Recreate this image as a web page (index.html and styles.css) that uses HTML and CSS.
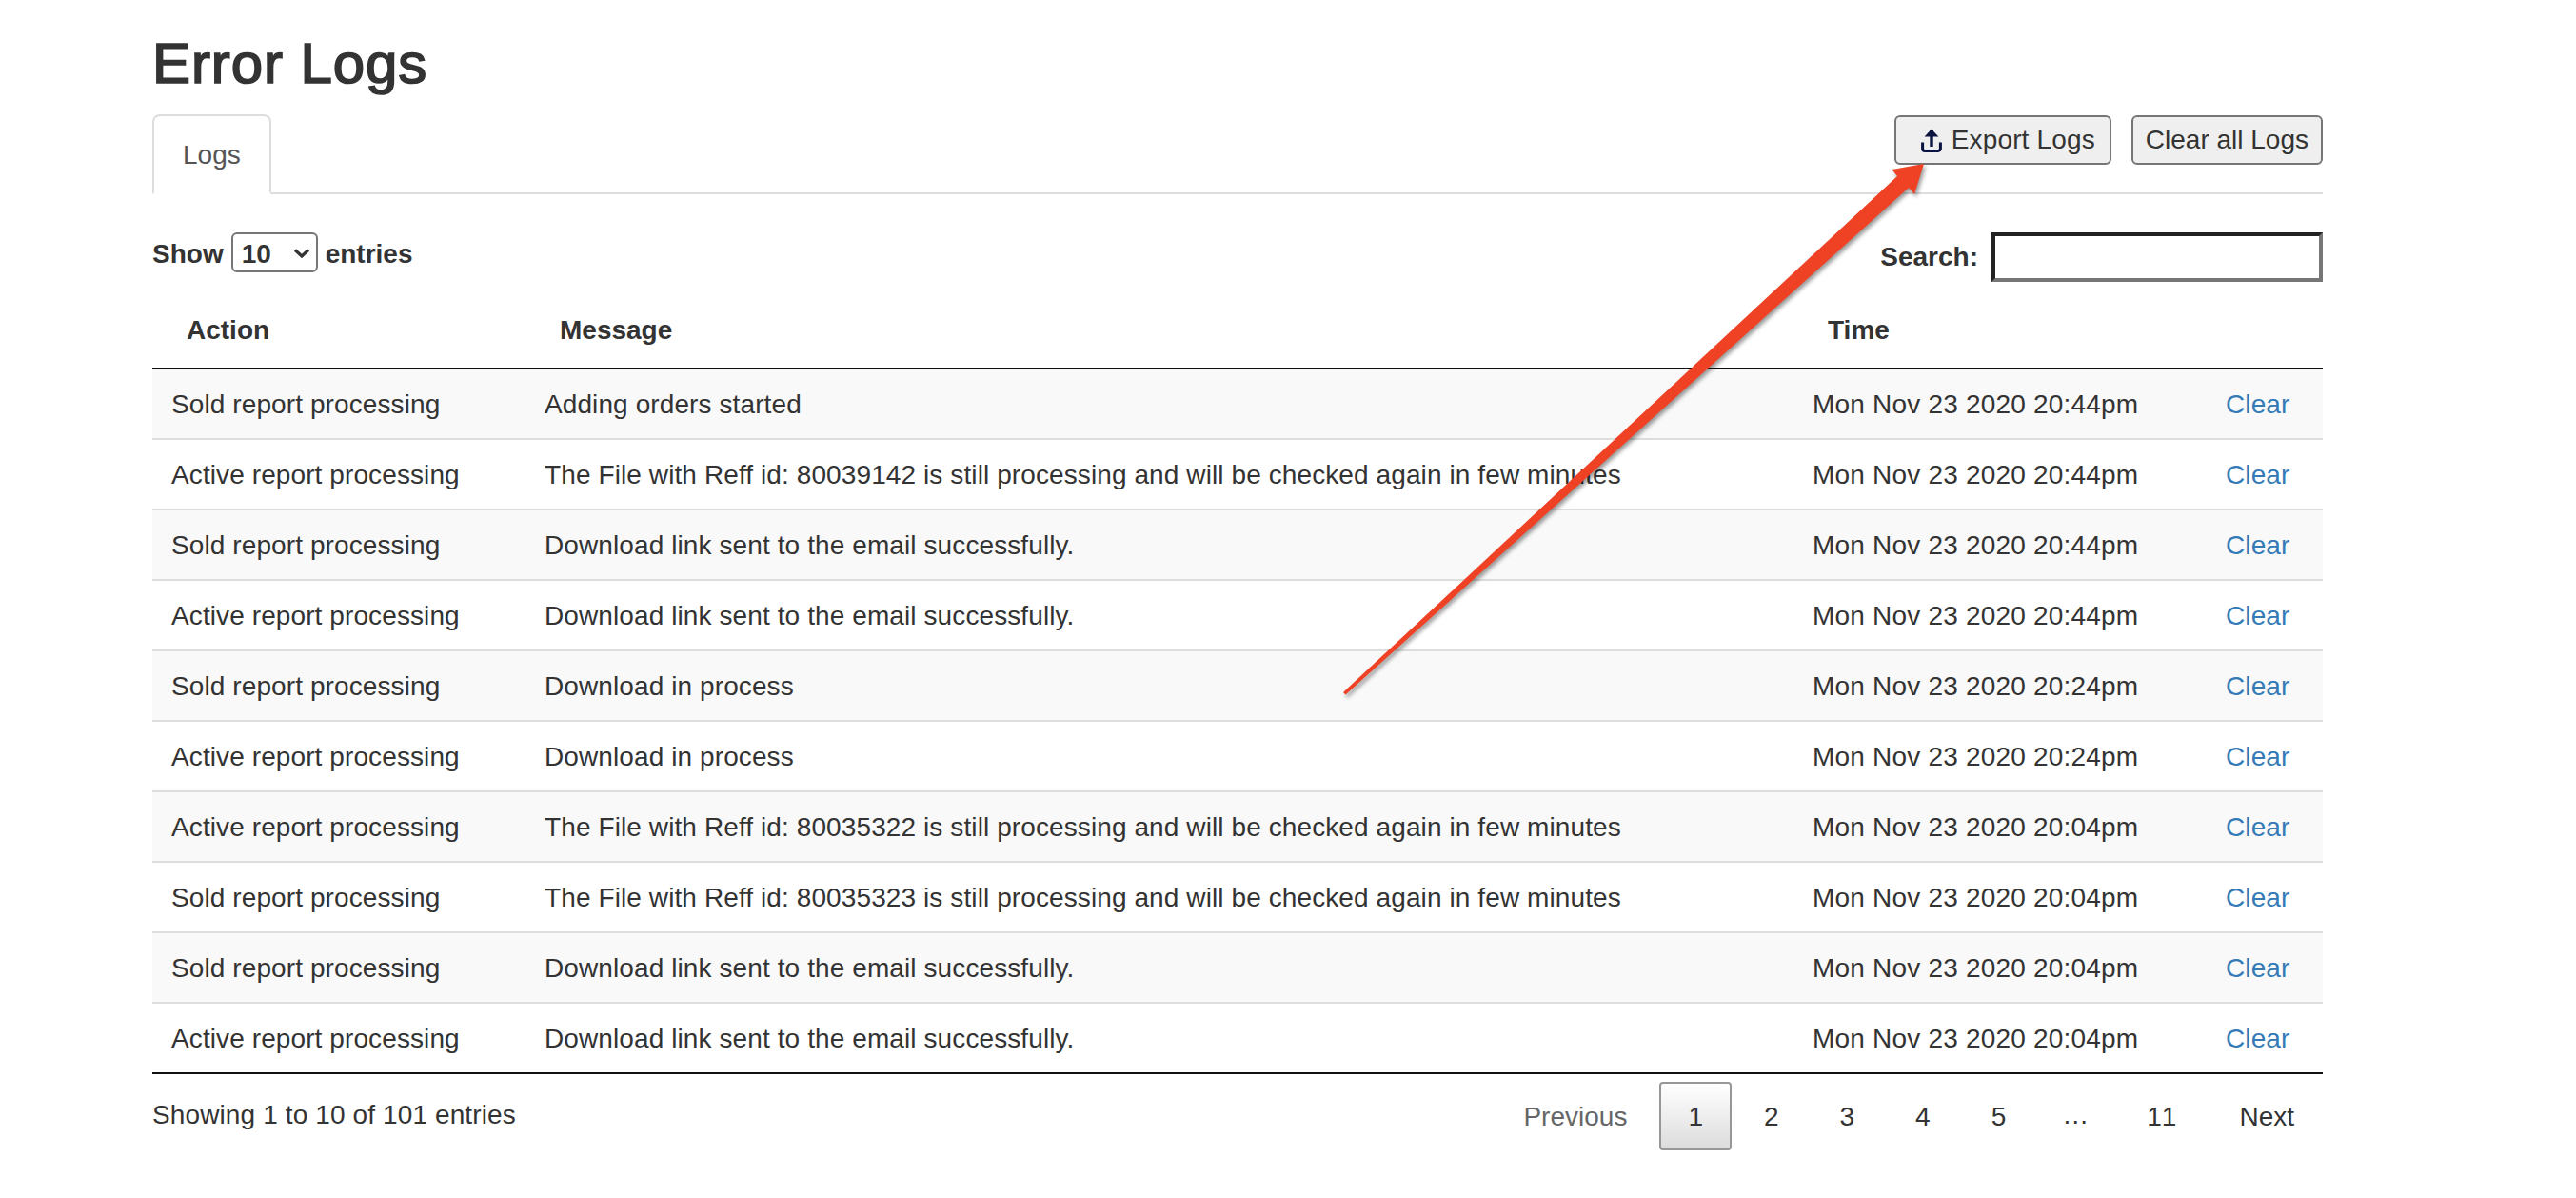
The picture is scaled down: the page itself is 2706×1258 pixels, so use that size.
FILE: index.html
```html
<!DOCTYPE html>
<html lang="en">
<head>
<meta charset="utf-8">
<title>Error Logs</title>
<link rel="stylesheet" href="styles.css">
</head>
<body>
<main class="page">
  <h1 class="title">Error Logs</h1>
  <div class="tabbar">
    <a class="tab">Logs</a>
    <div class="actions">
      <button class="btn btn-export" type="button">
        <svg class="btn-icon" viewBox="0 0 22 26" width="22" height="26" aria-hidden="true">
          <path d="M11 20V3" fill="none" stroke="#0b1340" stroke-width="3.4"/>
          <path d="M3.6 9.6L11 1.5l7.4 8.1z" fill="#0b1340"/>
          <path d="M1.6 15.5v6.6a2.4 2.4 0 0 0 2.4 2.4h14a2.4 2.4 0 0 0 2.4-2.4v-6.6" fill="none" stroke="#0b1340" stroke-width="3"/>
        </svg>
        Export Logs
      </button>
      <button class="btn" type="button">Clear all Logs</button>
    </div>
  </div>

  <div class="toolbar">
    <div class="length">
      <span class="length-text">Show</span>
      <span class="select-wrap">
        <select class="select"><option>10</option><option>25</option><option>50</option><option>100</option></select>
        <svg class="chevron" viewBox="0 0 18 10" width="18" height="10" aria-hidden="true"><path d="M2 1.5l7 6.5 7-6.5" fill="none" stroke="#333" stroke-width="3.2"/></svg>
      </span>
      <span class="length-text">entries</span>
    </div>
    <label class="filter"><span>Search:</span><input class="search" type="search"></label>
  </div>

  <table class="logs">
    <colgroup><col class="c1"><col class="c2"><col class="c3"><col class="c4"></colgroup>
    <thead><tr><th>Action</th><th>Message</th><th>Time</th><th></th></tr></thead>
    <tbody>
      <tr><td>Sold report processing</td><td>Adding orders started</td><td class="time">Mon Nov 23 2020 20:44pm</td><td><a class="clear">Clear</a></td></tr>
      <tr><td>Active report processing</td><td>The File with Reff id: 80039142 is still processing and will be checked again in few minutes</td><td class="time">Mon Nov 23 2020 20:44pm</td><td><a class="clear">Clear</a></td></tr>
      <tr><td>Sold report processing</td><td>Download link sent to the email successfully.</td><td class="time">Mon Nov 23 2020 20:44pm</td><td><a class="clear">Clear</a></td></tr>
      <tr><td>Active report processing</td><td>Download link sent to the email successfully.</td><td class="time">Mon Nov 23 2020 20:44pm</td><td><a class="clear">Clear</a></td></tr>
      <tr><td>Sold report processing</td><td>Download in process</td><td class="time">Mon Nov 23 2020 20:24pm</td><td><a class="clear">Clear</a></td></tr>
      <tr><td>Active report processing</td><td>Download in process</td><td class="time">Mon Nov 23 2020 20:24pm</td><td><a class="clear">Clear</a></td></tr>
      <tr><td>Active report processing</td><td>The File with Reff id: 80035322 is still processing and will be checked again in few minutes</td><td class="time">Mon Nov 23 2020 20:04pm</td><td><a class="clear">Clear</a></td></tr>
      <tr><td>Sold report processing</td><td>The File with Reff id: 80035323 is still processing and will be checked again in few minutes</td><td class="time">Mon Nov 23 2020 20:04pm</td><td><a class="clear">Clear</a></td></tr>
      <tr><td>Sold report processing</td><td>Download link sent to the email successfully.</td><td class="time">Mon Nov 23 2020 20:04pm</td><td><a class="clear">Clear</a></td></tr>
      <tr><td>Active report processing</td><td>Download link sent to the email successfully.</td><td class="time">Mon Nov 23 2020 20:04pm</td><td><a class="clear">Clear</a></td></tr>
    </tbody>
  </table>

  <div class="footer">
    <div class="info">Showing 1 to 10 of 101 entries</div>
    <nav class="pager">
      <a class="page-btn disabled">Previous</a>
      <a class="page-btn current">1</a>
      <a class="page-btn">2</a>
      <a class="page-btn">3</a>
      <a class="page-btn">4</a>
      <a class="page-btn">5</a>
      <span class="ellipsis">…</span>
      <a class="page-btn">11</a>
      <a class="page-btn next">Next</a>
    </nav>
  </div>
</main>

<svg class="annotation" viewBox="0 0 2706 1258" width="2706" height="1258" aria-hidden="true">
  <polygon points="2021,172 2011,204 2005,197 1413.5,729.5 1411,727 1993,185 1987.5,178" fill="#ef4123"/>
</svg>
</body>
</html>
```

FILE: styles.css
```css
* { box-sizing: border-box; }

html, body {
  margin: 0;
  padding: 0;
  background: #fff;
}

body {
  position: relative;
  height: 1258px;
  overflow: hidden;
  font-family: "Liberation Sans", Arial, sans-serif;
  font-size: 28px;
  line-height: 40px;
  color: #333;
}

.page {
  width: 2706px;
  padding: 34px 266px 0 160px;
}

.title {
  margin: 0 0 20px;
  font-size: 60px;
  line-height: 66px;
  font-weight: 400;
  letter-spacing: 0.9px;
  -webkit-text-stroke: 1.7px #333;
}

.tabbar {
  display: flex;
  justify-content: space-between;
  align-items: flex-start;
  height: 84px;
  border-bottom: 2px solid #ddd;
}

.tab {
  display: block;
  height: 84px;
  padding: 21px 30px 19px;
  color: #555;
  background: #fff;
  border: 2px solid #ddd;
  border-bottom-color: #fff;
  border-radius: 8px 8px 0 0;
}

.actions {
  display: flex;
  gap: 21px;
  margin-top: 1px;
}

.btn {
  display: flex;
  align-items: center;
  height: 52px;
  padding: 0 13px;
  font-family: inherit;
  font-size: 28px;
  line-height: 32px;
  color: #333;
  background: #efefef;
  border: 2px solid #767676;
  border-radius: 6px;
}

.btn-export {
  gap: 10px;
  padding: 0 15px 0 26px;
  letter-spacing: 0.15px;
}

.btn-icon {
  display: block;
  flex: none;
}

.toolbar {
  display: flex;
  justify-content: space-between;
  align-items: flex-start;
  height: 62px;
  margin-top: 40px;
  font-weight: 700;
}

.length {
  display: flex;
  align-items: center;
  gap: 8px;
  height: 42px;
}

.length-text { padding-top: 3px; }

.select-wrap {
  position: relative;
  display: block;
  width: 91px;
  height: 42px;
}

.select {
  display: block;
  width: 100%;
  height: 100%;
  padding: 3px 0 0 9px;
  appearance: none;
  font-family: inherit;
  font-size: 28px;
  font-weight: 700;
  color: #333;
  background: #fff;
  border: 2px solid #767676;
  border-radius: 6px;
}

.chevron {
  position: absolute;
  top: 17px;
  left: 65px;
  pointer-events: none;
}

.filter {
  display: flex;
  align-items: center;
  gap: 14px;
}

.search {
  display: block;
  width: 348px;
  height: 52px;
  padding: 0;
  background: #fff;
  border-width: 4px;
  border-style: solid;
  border-color: #222 #767676 #767676 #222;
  border-radius: 0;
}

.logs {
  width: 2280px;
  table-layout: fixed;
  border-collapse: separate;
  border-spacing: 0;
}

.c1 { width: 392px; }
.c2 { width: 1332px; }
.c3 { width: 434px; }
.c4 { width: 122px; }

.logs th {
  padding: 21px 36px 19px;
  text-align: left;
  font-weight: 700;
  border-bottom: 2px solid #111;
}

.logs td {
  height: 74px;
  padding: 17px 20px 15px;
  border-bottom: 2px solid #ddd;
  white-space: nowrap;
  letter-spacing: 0.1px;
}

.logs td.time { letter-spacing: 0.2px; }

.logs tbody tr:nth-child(odd) td { background: #f9f9f9; }

.logs tbody tr:last-child td { border-bottom: 2px solid #111; }

.clear { color: #337ab7; }

.footer {
  display: flex;
  justify-content: space-between;
  align-items: flex-start;
}

.info {
  padding-top: 23px;
  letter-spacing: 0.12px;
}

.pager {
  display: flex;
  gap: 4px;
  padding-top: 8px;
  font-kerning: none;
}

.page-btn {
  display: block;
  padding: 15px 28px 13px;
  min-width: 60px;
  text-align: center;
  color: #333;
  border: 2px solid transparent;
  border-radius: 4px;
}

.page-btn.disabled { color: #666; }

.page-btn.next { margin-left: 2px; }

.page-btn.current {
  background: linear-gradient(to bottom, #fff 0%, #dcdcdc 100%);
  border-color: #979797;
}

.ellipsis {
  display: block;
  padding: 15px 27px 13px 25px;
  color: #333;
}

.annotation {
  position: absolute;
  top: 0;
  left: 0;
  pointer-events: none;
  filter: drop-shadow(2px 3px 2px rgba(0, 0, 0, 0.4));
}
```
